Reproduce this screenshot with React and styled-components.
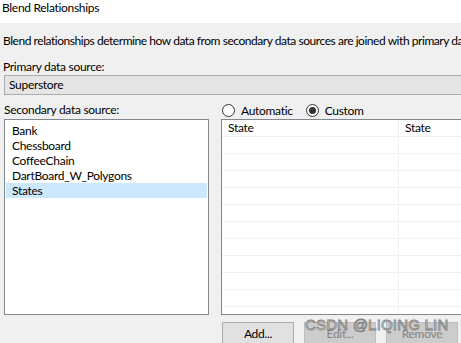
import React from "react";
import styled, { createGlobalStyle } from "styled-components";

const Global = createGlobalStyle`
  html, body { margin: 0; padding: 0; background: #f0f0f0; }
  body { font-family: Lato, "Noto Sans", sans-serif; font-size: 12px; letter-spacing: -0.3px; color: #000; }
  * { box-sizing: border-box; }
`;

const Window = styled.div`
  position: relative;
  width: 461px;
  height: 343px;
  overflow: hidden;
  background: #f0f0f0;
`;

const TitleBar = styled.div`
  height: 23px;
  background: #fff;
  padding: 0 0 0 2px;
  line-height: 16px;
  white-space: nowrap;
`;

const Body = styled.div`
  padding: 10px 0 0 3px;
`;

const Description = styled.div`
  white-space: nowrap;
  line-height: 16px;
  height: 16px;
  letter-spacing: -0.45px;
`;

const Label = styled.div`
  line-height: 16px;
  height: 16px;
  white-space: nowrap;
  margin-top: ${(p) => p.$mt || 0}px;
`;

const ReadOnlyField = styled.div`
  margin: 0 0 0 1px;
  height: 20px;
  border: 1px solid #adadad;
  border-right: none;
  background: #e5e5e5;
  padding-left: 4px;
  line-height: 18px;
`;

const Columns = styled.div`
  display: grid;
  grid-template-columns: 205px 1fr;
  column-gap: 12px;
  margin-top: 7px;
  margin-left: 1px;
`;

const Column = styled.div`
  display: flex;
  flex-direction: column;
`;

const ListBox = styled.div`
  margin-top: 1px;
  height: 196px;
  border: 1px solid #828790;
  background: #fff;
  padding: 3px 1px 0 1px;
`;

const ListItem = styled.div`
  height: 15px;
  line-height: 15px;
  padding-left: 6px;
  white-space: nowrap;
  background: ${(p) => (p.$selected ? "#cce8ff" : "transparent")};
`;

const RadioRow = styled.div`
  display: flex;
  align-items: center;
  height: 16px;
  margin-left: 1px;
  gap: 13px;
`;

const RadioOption = styled.label`
  display: flex;
  align-items: center;
  gap: 6px;
  white-space: nowrap;
`;

const RadioCircle = styled.span`
  width: 13px;
  height: 13px;
  border-radius: 50%;
  border: 1px solid #333;
  background: #fff;
  display: flex;
  align-items: center;
  justify-content: center;
  &::after {
    content: "";
    width: 7px;
    height: 7px;
    border-radius: 50%;
    background: ${(p) => (p.$checked ? "#333" : "transparent")};
  }
`;

const Table = styled.div`
  margin-top: 1px;
  height: 196px;
  border: 1px solid #828790;
  border-right: none;
  background: #fff;
  overflow: hidden;
`;

const TableRow = styled.div`
  display: grid;
  grid-template-columns: 177px 1fr;
  height: 17px;
  border-bottom: 1px solid #f0f0f0;
`;

const Cell = styled.div`
  padding-left: 6px;
  line-height: 16px;
  white-space: nowrap;
  border-right: ${(p) => (p.$divider ? "1px solid #f0f0f0" : "none")};
`;

const ButtonRow = styled.div`
  display: flex;
  gap: 10px;
  margin-top: 7px;
  margin-left: 1px;
`;

const Button = styled.button`
  width: 72px;
  height: 23px;
  font: inherit;
  letter-spacing: inherit;
  color: ${(p) => (p.disabled ? "#838383" : "#000")};
  background: ${(p) => (p.disabled ? "#cccccc" : "#e1e1e1")};
  border: 1px solid ${(p) => (p.disabled ? "#bfbfbf" : "#adadad")};
  padding: 0;
  line-height: 20px;
`;

const Watermark = styled.div`
  position: absolute;
  left: 305px;
  top: 315px;
  font-family: "Liberation Sans", sans-serif;
  font-size: 15px;
  line-height: 20px;
  color: rgba(235, 235, 235, 0.7);
  -webkit-text-stroke: 0.8px rgba(110, 110, 110, 0.85);
  letter-spacing: 0.2px;
  white-space: nowrap;
  pointer-events: none;
`;

const items = ["Bank", "Chessboard", "CoffeeChain", "DartBoard_W_Polygons", "States"];

export default function App() {
  const rows = Array.from({ length: 11 });
  return (
    <>
      <Global />
      <Window>
        <TitleBar>Blend Relationships</TitleBar>
        <Body>
          <Description>
            Blend relationships determine how data from secondary data sources are joined with primary data sources.
          </Description>
          <Label $mt={10}>Primary data source:</Label>
          <ReadOnlyField>Superstore</ReadOnlyField>
          <Columns>
            <Column>
              <Label>Secondary data source:</Label>
              <ListBox>
                {items.map((it) => (
                  <ListItem key={it} $selected={it === "States"}>
                    {it}
                  </ListItem>
                ))}
              </ListBox>
            </Column>
            <Column>
              <RadioRow>
                <RadioOption>
                  <RadioCircle />
                  Automatic
                </RadioOption>
                <RadioOption>
                  <RadioCircle $checked />
                  Custom
                </RadioOption>
              </RadioRow>
              <Table>
                <TableRow>
                  <Cell $divider>State</Cell>
                  <Cell>State</Cell>
                </TableRow>
                {rows.map((_, i) => (
                  <TableRow key={i}>
                    <Cell $divider />
                    <Cell />
                  </TableRow>
                ))}
              </Table>
              <ButtonRow>
                <Button>Add...</Button>
                <Button disabled>Edit...</Button>
                <Button disabled>Remove</Button>
              </ButtonRow>
            </Column>
          </Columns>
        </Body>
        <Watermark>CSDN @LIQING LIN</Watermark>
      </Window>
    </>
  );
}
